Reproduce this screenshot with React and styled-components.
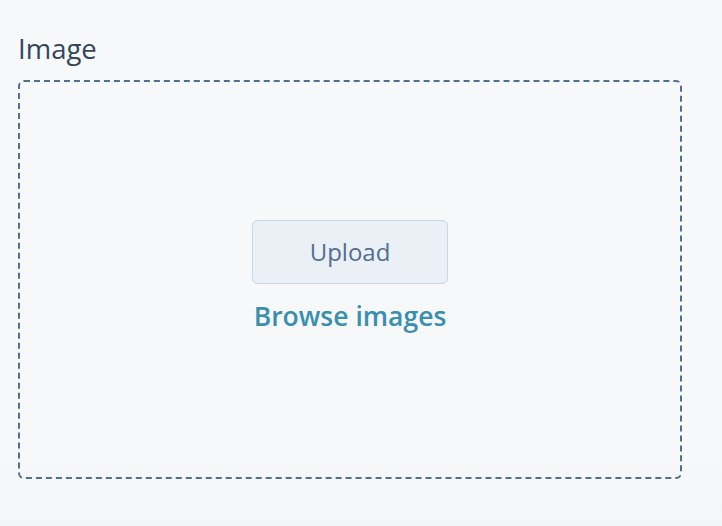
import React from "react";
import styled, { createGlobalStyle } from "styled-components";

const GlobalStyle = createGlobalStyle`
  html, body {
    margin: 0;
    padding: 0;
    background: #f6f8fa;
  }
  body {
    font-family: "Open Sans", Lato, sans-serif;
    -webkit-font-smoothing: antialiased;
  }
`;

const Page = styled.div`
  width: 722px;
  height: 526px;
  box-sizing: border-box;
  padding: 31px 40px 0 18px;
  background: linear-gradient(180deg, #f6f8fa 0%, #f6f8fa 85%, #f3f5f7 100%);
`;

const Label = styled.div`
  color: #33475b;
  font-size: 27.5px;
  font-weight: 500;
  line-height: 35px;
  margin-bottom: 14px;
`;

const DropZone = styled.div`
  width: 664px;
  height: 399px;
  box-sizing: border-box;
  border: 2px dashed #516f90;
  border-radius: 6px;
  display: flex;
  flex-direction: column;
  align-items: center;
  justify-content: center;
  gap: 16px;
  padding-bottom: 8px;
`;

const UploadButton = styled.button`
  width: 196px;
  height: 64px;
  box-sizing: border-box;
  background: #eaf0f6;
  border: 1.5px solid #cbd6e2;
  border-radius: 6px;
  color: #516f90;
  font-family: inherit;
  font-size: 24px;
  cursor: pointer;
`;

const BrowseLink = styled.a`
  color: #3a8fae;
  font-size: 26.5px;
  font-weight: 600;
  line-height: 32px;
  text-decoration: none;
  cursor: pointer;
`;

export default function App() {
  return (
    <>
      <GlobalStyle />
      <Page>
        <Label>Image</Label>
        <DropZone>
          <UploadButton>Upload</UploadButton>
          <BrowseLink>Browse images</BrowseLink>
        </DropZone>
      </Page>
    </>
  );
}
